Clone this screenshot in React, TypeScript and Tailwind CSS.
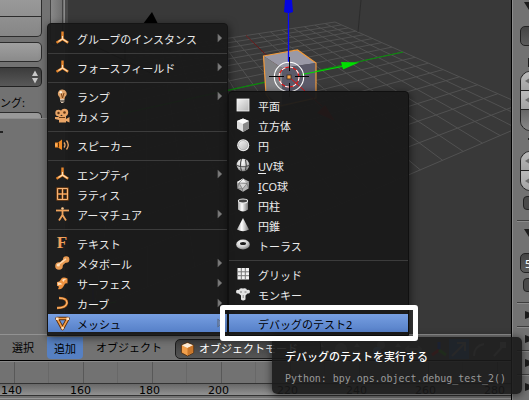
import React from "react";

type P = [number, number];

// Perspective projection of the viewport floor; both coordinates run from -1 to 1.
function floor(u: number, v: number): P {
  const w = 1 - 0.427 * u + 0.191 * v;
  return [(289 - 62 * u + 191 * v) / w, (77 + 26.3 * u - 15.1 * v) / w];
}

function seg(a: P, b: P) {
  return `M${a[0].toFixed(1)} ${a[1].toFixed(1)}L${b[0].toFixed(1)} ${b[1].toFixed(1)}`;
}

const steps = Array.from({ length: 17 }, (_, i) => (i - 8) / 8);
const gridPath = steps
  .map((t) => seg(floor(t, -1), floor(t, 1)) + seg(floor(-1, t), floor(1, t)))
  .join("");

function Scene() {
  return (
    <svg viewBox="68 0 443 334" width="443" height="334" className="block">
      <path d={gridPath} stroke="#515151" strokeWidth="1" fill="none" />
      <path d={seg(floor(0, -1), floor(0, 1))} stroke="#0a8c0a" strokeWidth="1.2" />
      <path d={seg(floor(-1, 0), [289, 77])} stroke="#6a1414" />
      <path d="M143 24L152 12L158 24Z" fill="#000" />
      <path d="M361 0L358 32" stroke="#2a2a2a" fill="none" strokeWidth="0.9" />
      <path d="M92 45L124 60L155 75M125 31V60" stroke="#000" fill="none" />
      <path d="M263.500 56L297.500 50L316 63L282 68Z" fill="#9a99a6" />
      <path d="M263.500 56L282 68V107L266 94Z" fill="#828285" />
      <path d="M282 68L316 63V98L282 107Z" fill="#5b5a69" />
      <path d="M263.500 56L297.500 50L316 63V98L275 107L266 94Z" fill="none" stroke="#f19a3c" strokeWidth="1.2" />
      <path d="M289 77L322 106" stroke="#e01010" />
      <path d="M317 113L325 105L335 121Z" fill="#b41212" />
      <path d="M302 74.500L345 66" stroke="#00dc00" strokeWidth="1.2" />
      <path d="M341 62L359 62.500L343 69.500Z" fill="#00e000" />
      <path d="M288.500 62V10" stroke="#0a0aff" strokeWidth="1.3" />
      <path d="M285 0H292L293 12Q288.500 14 284 12Z" fill="#0505e0" />
      <circle cx="289" cy="77" r="14.700" fill="none" stroke="#fff" strokeWidth="1.1" />
      <circle cx="289" cy="77" r="10" fill="none" stroke="#f01010" strokeWidth="1.1" />
      <circle cx="289" cy="77" r="10" fill="none" stroke="#fff" strokeWidth="1.1" strokeDasharray="3.900 3.950" />
      <path d="M269 76.500H284M295 76.500H309M289.500 57V71M289.500 83V97" stroke="#050505" />
      <rect x="287" y="75" width="4" height="4" fill="#f5a84c" stroke="#3a2a20" strokeWidth="0.8" />
      <path d="M93 306V283" stroke="#2020b0" />
      <path d="M93 306L116 302" stroke="#20a020" />
      <path d="M93 306L107 314" stroke="#a02020" />
    </svg>
  );
}

const O = "#e8872c";
const L = "#ffe0b8";

function Icon({ name }: { name: string }) {
  let body: React.ReactNode = null;
  switch (name) {
    case "empty":
      body = (
        <g fill="none">
          <path d="M8.500 1.500V9L2.500 12.700M8.500 9L14.200 12.700" stroke={O} strokeWidth="2.400" />
          <path d="M8.500 6V9L4.500 11.500M8.500 9L13.500 12.300" stroke={L} strokeWidth="1.100" />
        </g>
      );
      break;
    case "lamp":
      body = (
        <g>
          <path d="M8 1.500A4.200 4.200 0 0 0 5.500 9L6 11H10.500L11 9A4.200 4.200 0 0 0 8 1.500Z" fill="#dfa36a" />
          <path d="M7 4.500L8.500 10L10 5" stroke="#7a4214" fill="none" />
          <circle cx="6.800" cy="4.200" r="1.300" fill="#fff0dc" />
          <path d="M6 11.500H10.500M6 13H10.500M7 14.500H9.500" stroke="#d9c4ae" />
        </g>
      );
      break;
    case "camera":
      body = (
        <g fill="#e9a567">
          <circle cx="4.500" cy="5" r="3.200" />
          <circle cx="10.500" cy="4.500" r="3.700" />
          <path d="M1 9H4L5 8H12V14.500H5V12L1 11ZM12 11L15.500 9V14.500L12 13Z" />
          <circle cx="4.500" cy="5" r="1.200" fill="#5c3414" />
          <circle cx="10.500" cy="4.500" r="1.300" fill="#5c3414" />
          <path d="M5 9.500H11" stroke="#6b3c14" />
        </g>
      );
      break;
    case "speaker":
      body = (
        <g>
          <path d="M1 5.500H4L8 2.500V13L4 10.500H1Z" fill="#f08a24" />
          <path d="M4.500 5.500V10.500" stroke="#5c2c04" />
          <path d="M2 6.500V9.500" stroke="#ffd09a" />
          <path d="M10 5.500Q12 8 10 10.500M12.500 3.500Q16 8 12.500 12.500" fill="none" stroke="#e9a567" strokeWidth="1.300" />
        </g>
      );
      break;
    case "lattice":
      body = (
        <g fill="none">
          <path d="M3.500 2.500H13.500V13.500H3.500ZM8.500 2.500V13.500M3.500 8H13.500" stroke="#9c5214" strokeWidth="2.200" />
          <path d="M3.500 2.500H13.500V13.500H3.500ZM8.500 2.500V13.500M3.500 8H13.500" stroke="#f5b477" />
        </g>
      );
      break;
    case "armature":
      body = (
        <g fill="none" stroke="#eda25c">
          <path d="M2 4.500H15" strokeWidth="1.800" />
          <path d="M8.500 4V9L5 14.500M8.500 9L12 14.500" strokeWidth="1.800" />
          <circle cx="8.500" cy="2.500" r="1.300" fill="#ffc98e" stroke="none" />
        </g>
      );
      break;
    case "meta":
      body = (
        <g>
          <path d="M5 11L12 4.500" stroke="#e89a52" strokeWidth="4" />
          <circle cx="5" cy="11" r="3.800" fill="#e89a52" />
          <circle cx="12.200" cy="4.500" r="3.200" fill="#e89a52" />
          <path d="M4 10L12 3.800" stroke="#ffd9ae" strokeWidth="1.500" />
          <circle cx="4.300" cy="10" r="1.600" fill="#ffe2bf" />
        </g>
      );
      break;
    case "surface":
      body = (
        <g>
          <path d="M3 7Q6 7 7 4Q9 1.500 13.500 3.500V8.500Q11 7.500 10 10.500Q8 15 4 14Q6 10.500 3 11Z" fill="#ee9240" />
          <path d="M3.500 7.500Q7 7 8.500 9.500Q6 9 4 10.500ZM8 5Q10 3 12.500 4Q10 5 9.500 7Z" fill="#ffe0bc" />
        </g>
      );
      break;
    case "curve":
      body = (
        <g fill="none">
          <path d="M5 3Q13 3 13 8Q12 13 3 13" stroke="#d97822" strokeWidth="2.400" />
          <path d="M5 3Q13 3 13 8Q12 13 3 13" stroke="#ffc78c" strokeWidth="0.9" />
        </g>
      );
      break;
    case "mesh":
      body = (
        <g fill="none">
          <path d="M3 3.500H14L8.500 13.500Z" stroke="#5b2c08" strokeWidth="3.600" strokeLinejoin="round" />
          <path d="M3 3.500H14L8.500 13.500Z" stroke="#f3a04e" strokeWidth="1.700" />
          <path d="M2 2.500H4.500V5H2ZM12.500 2.500H15V5H12.500ZM7.500 12H9.700V14.300H7.500Z" fill="#ffe3c4" />
        </g>
      );
      break;
    case "plane":
      body = <rect x="2" y="2" width="12" height="12" fill="url(#gp)" stroke="#f5f5f5" strokeWidth="0.8" />;
      break;
    case "cube":
      body = (
        <g>
          <path d="M8 1.500L14 4V11.500L8 15L2 11.500V4Z" fill="#ddd" />
          <path d="M8 1.500L14 4L8 7L2 4Z" fill="#fbfbfb" />
          <path d="M8 7L14 4V11.500L8 15Z" fill="#888" />
        </g>
      );
      break;
    case "circle":
      body = (
        <g>
          <circle cx="8.200" cy="8.200" r="6" fill="#f4f4f4" />
          <circle cx="8.200" cy="8.200" r="4.700" fill="url(#gp)" stroke="#999" strokeWidth="0.6" />
        </g>
      );
      break;
    case "uv":
      body = (
        <g>
          <circle cx="8" cy="8" r="6.300" fill="url(#gs)" />
          <path d="M6.500 2Q4.500 8 6.500 14M10.500 2.500Q12 8 10.500 13.500M2 8.500Q8 11 14 8.500" stroke="#444" fill="none" strokeWidth="1.100" />
        </g>
      );
      break;
    case "ico":
      body = (
        <g>
          <path d="M8 1.500L14 4.500L13.500 11.500L8 14.800L2.500 11.500L2 5Z" fill="#b4b4b4" />
          <path d="M8 1.500L11 5.500L4 6L2 5Z" fill="#f2f2f2" />
          <path d="M4 6L12 6.500L7.500 12Z" fill="#d8d8d8" />
          <path d="M4 6L12 6.500L7.500 12ZM12 6.500L14 4.500M12 6.500L13.500 11.500M7.500 12V14.500M7.500 12L2.500 11.500L4 6L8 2" stroke="#666" strokeWidth="0.6" fill="none" />
        </g>
      );
      break;
    case "cylinder":
      body = (
        <g>
          <path d="M3 4V12.500Q8 16.500 13 12.500V4Z" fill="url(#gh)" />
          <ellipse cx="8" cy="4" rx="4.600" ry="2" fill="#444" stroke="#e8e8e8" strokeWidth="1.100" />
        </g>
      );
      break;
    case "cone":
      body = <path d="M8 1L14 12.500Q8 16 2 12.500Z" fill="url(#gh)" />;
      break;
    case "torus":
      body = (
        <g>
          <ellipse cx="8" cy="7.500" rx="6.800" ry="5" fill="url(#gs)" />
          <ellipse cx="8" cy="6.500" rx="3" ry="1.500" fill="#1c1c1c" />
        </g>
      );
      break;
    case "grid":
      body = (
        <g>
          <rect x="2.500" y="2" width="11.500" height="11.500" fill="#f2f2f2" />
          <path d="M6.300 2V13.500M10.300 2V13.500M2.500 5.800H14M2.500 9.700H14" stroke="#777" />
        </g>
      );
      break;
    case "monkey":
      body = (
        <g>
          <path d="M1 6Q1 3 4 4Q4.500 1.500 8 2.500Q11.500 1.500 12 4Q15 3 15 6Q14.500 8 12.500 7.500L10.500 9.500V13.500Q8 15.500 6 13.500V9.500L3.500 7.500Q1.500 8 1 6Z" fill="#e4e4e4" />
          <path d="M5 6H7M9.500 6H11.500" stroke="#777" strokeWidth="1.200" />
          <path d="M8.200 9V12" stroke="#888" />
        </g>
      );
      break;
  }
  if (name === "text")
    return <span className="w-4 shrink-0 text-center font-['Liberation_Serif',serif] text-[17px] leading-[16px] font-bold text-[#f0a05a]">F</span>;
  return (
    <svg viewBox="0 0 16 16" width="16" height="16" className="shrink-0">
      {body}
    </svg>
  );
}

function Gradients() {
  return (
    <svg width="0" height="0" className="absolute">
      <defs>
        <linearGradient id="gp" x1="0" y1="0" x2="1" y2="1">
          <stop offset="0" stopColor="#f4f4f4" />
          <stop offset="1" stopColor="#b4b4b4" />
        </linearGradient>
        <linearGradient id="gh">
          <stop offset="0" stopColor="#a8a8a8" />
          <stop offset="0.4" stopColor="#fff" />
          <stop offset="1" stopColor="#777" />
        </linearGradient>
        <radialGradient id="gs" cx="0.4" cy="0.3" r="0.75">
          <stop offset="0" stopColor="#fff" />
          <stop offset="0.6" stopColor="#ccc" />
          <stop offset="1" stopColor="#777" />
        </radialGradient>
      </defs>
    </svg>
  );
}

type Item = { icon: string; label: React.ReactNode; arrow?: boolean; active?: boolean } | null;

const addMenu: Item[] = [
  { icon: "empty", label: "グループのインスタンス", arrow: true },
  null,
  { icon: "empty", label: "フォースフィールド", arrow: true },
  null,
  { icon: "lamp", label: "ランプ", arrow: true },
  { icon: "camera", label: "カメラ" },
  null,
  { icon: "speaker", label: "スピーカー" },
  null,
  { icon: "empty", label: "エンプティ", arrow: true },
  { icon: "lattice", label: "ラティス" },
  { icon: "armature", label: "アーマチュア", arrow: true },
  null,
  { icon: "text", label: "テキスト" },
  { icon: "meta", label: "メタボール", arrow: true },
  { icon: "surface", label: "サーフェス", arrow: true },
  { icon: "curve", label: "カーブ", arrow: true },
  { icon: "mesh", label: "メッシュ", arrow: true, active: true },
];

const meshMenu: Item[] = [
  { icon: "plane", label: "平面" },
  { icon: "cube", label: "立方体" },
  { icon: "circle", label: "円" },
  { icon: "uv", label: <><u className="underline-offset-2">U</u>V球</> },
  { icon: "ico", label: <><u className="underline-offset-2">I</u>CO球</> },
  { icon: "cylinder", label: "円柱" },
  { icon: "cone", label: "円錐" },
  { icon: "torus", label: "トーラス" },
  null,
  { icon: "grid", label: "グリッド" },
  { icon: "monkey", label: "モンキー" },
  null,
  { icon: "", label: "デバッグのテスト2", active: true },
];

function MenuList({ items }: { items: Item[] }) {
  return (
    <>
      {items.map((it, i) =>
        it === null ? (
          <div key={i} className="h-[9px] pt-1">
            <div className="h-px bg-[#3c3c3c]" />
          </div>
        ) : (
          <div key={i} className="h-5">
            <div
              className={
                it.active
                  ? "flex h-[18px] items-center gap-[7px] bg-linear-to-b from-[#779fe2] to-[#5680c8] pr-[4px] pl-[6px] text-black"
                  : "flex h-[18px] items-center gap-[7px] pr-[4px] pl-[6px] text-[#ececec]"
              }
            >
              <Icon name={it.icon} />
              <span className="flex-1 pt-[3px] leading-[17px]">{it.label}</span>
              {it.arrow && (
                <svg width="6" height="10" viewBox="0 0 6 10">
                  <path d="M0.800 1L5 5L0.800 9Z" fill={it.active ? "#6c86b4" : "#7c7c7c"} stroke="#555" strokeWidth="0.5" />
                </svg>
              )}
            </div>
          </div>
        ),
      )}
    </>
  );
}

function LeftPanel() {
  return (
    <div className="flex h-[334px] w-[68px] shrink-0 bg-[#727272]">
      <div className="flex w-[50px] flex-col">
        <div className="h-[37px] w-[42px] rounded-br-[5px] border-r border-b border-[#2c2c2c] bg-linear-to-b from-[#999] to-[#868686]">
          <div className="h-[17px] border-b border-[#2c2c2c]" />
        </div>
        <div className="mt-[5px] h-5 w-[42px] rounded-r-[5px] border border-l-0 border-[#2c2c2c] bg-linear-to-b from-[#a0a0a0] to-[#8a8a8a]" />
        <div className="mt-[5px] flex h-5 w-[42px] items-center justify-end rounded-r-[5px] border border-l-0 border-[#222] bg-linear-to-b from-[#3c3c3c] to-[#585858] pr-[3px]">
          <svg width="6" height="14" viewBox="0 0 6 14">
            <path d="M0 6L3 0.500L6 6ZM0 8L3 13.500L6 8Z" fill="#c8c8c8" />
          </svg>
        </div>
        <div className="mt-[6px] h-[19px] pt-px leading-[18px] whitespace-nowrap text-black">ング:</div>
        <div className="h-[6px] w-[42px] rounded-tr-[5px] border-t border-r border-[#2c2c2c] bg-[#999]" />
        <div className="h-px w-[47px] bg-[#8c8c8c]" />
        <div className="flex-1 bg-[#727272] pt-[12px]">
          <div className="h-[2px] w-[3px] bg-[#222]" />
        </div>
      </div>
      <div className="h-[46px] w-[13px] rounded-b-[6px] border border-t-0 border-[#444] bg-linear-to-r from-[#888] to-[#707070]" />
      <div className="ml-auto w-1 border-l border-[#8a8a8a] bg-[#4a4a4a]" />
    </div>
  );
}

function Fold({ open }: { open?: boolean }) {
  return (
    <svg width="12" height="8" viewBox="0 0 12 8" className="block shrink-0">
      <path d={open ? "M0 0H12L5 8Z" : "M1 0L11 4L1 8Z"} fill="#1c1c1c" />
    </svg>
  );
}

function Section() {
  return (
    <div className="flex h-6 items-center border-t border-[#3e3e3e] pl-[7px] shadow-[inset_0_1px_0_#8a8a8a]">
      <Fold />
    </div>
  );
}

function Step() {
  return (
    <div className="flex h-full items-center bg-linear-to-b from-[#bbb] to-[#a2a2a2] pl-1">
      <svg width="5" height="6" viewBox="0 0 5 6">
        <path d="M5 0V6L0 3Z" fill="#6a6a6a" />
      </svg>
    </div>
  );
}

function RightPanel() {
  return (
    <div className="h-[400px] w-[18px] shrink-0 overflow-hidden border-l border-black bg-[#727272] pl-[5px] shadow-[inset_1px_0_0_#8c8c8c]">
      <div className="h-[26px] pt-[2px] pl-[7px]"><Fold open /></div>
      <div className="ml-[3px] h-5 w-5 rounded-l-[5px] border border-[#222] bg-linear-to-b from-[#444] to-[#5c5c5c]" />
      <div className="h-[25px] pt-[12px] pl-[11px]">
        <div className="h-[9px] w-px bg-[#1c1c1c]" />
      </div>
      <div className="ml-[3px] grid h-[60px] w-5 grid-rows-[19px_19px_20px] divide-y divide-[#222] overflow-hidden rounded-l-[10px] border border-[#222]">
        <div><Step /></div>
        <div><Step /></div>
        <div className="bg-linear-to-b from-[#666] to-[#888]" />
      </div>
      <div className="h-5 pt-[7px] pl-[11px]">
        <div className="h-[2px] w-px bg-[#1c1c1c]" />
      </div>
      <div className="ml-[3px] grid h-[40px] w-5 grid-rows-[19px_19px] divide-y divide-[#222] overflow-hidden rounded-l-[10px] border border-[#222]">
        <div><Step /></div>
        <div><Step /></div>
      </div>
      <div className="mt-[5px] ml-[6px] h-[14px] w-5 rounded-l-[4px] border border-[#222] bg-[#4a4a4a]" />
      <div className="mt-[10px] h-[33px] border-t border-[#3e3e3e] pt-[8px] pl-[7px] shadow-[inset_0_1px_0_#8a8a8a]"><Fold open /></div>
      <div className="ml-[3px] h-5 w-5 rounded-l-[5px] border border-[#222] bg-linear-to-b from-[#444] to-[#5c5c5c] pl-1 leading-[20px] text-white">5</div>
      <div className="mt-[5px] ml-[6px] h-[14px] w-5 rounded-l-[4px] border border-[#222] bg-[#4a4a4a]" />
      <div className="mt-[10px]">
        <Section />
        <Section />
        <Section />
        <Section />
      </div>
    </div>
  );
}

function Header() {
  return (
    <div className="flex h-[27px] items-center overflow-hidden border-t border-b border-t-[#929292] border-b-black bg-[#727272] pl-[12px] whitespace-nowrap text-black">
      <span className="w-[35px] pt-[2px]">選択</span>
      <span className="h-[22px] w-9 rounded-b-[4px] bg-[#5680c2] text-center leading-[24px]">追加</span>
      <span className="ml-[13px] w-[79px] pt-[2px]">オブジェクト</span>
      <div className="mt-[2px] flex h-[20px] w-[146px] shrink-0 items-center gap-[4px] rounded-[5px] border border-[#1c1c1c] bg-linear-to-b from-[#3e3e3e] to-[#555] pl-1 text-white">
        <svg width="15" height="16" viewBox="0 0 16 16">
          <path d="M8 1L14.500 4V12L8 15.500L1.500 12V4Z" fill="#f2a04c" stroke="#4a2608" strokeWidth="0.8" />
          <path d="M8 1.500L14 4L8 7L2 4Z" fill="#fff0dc" />
          <path d="M8 7L14 4V11.500L8 15Z" fill="#c9762a" />
        </svg>
        <span className="pt-px">オブジェクトモード</span>
      </div>
      <svg width="190" height="20" viewBox="321 0 190 20" className="mt-[2px] shrink-0">
        <circle cx="341" cy="10" r="6" fill="#999" />
        <circle cx="381" cy="6" r="4" fill="#999" />
        <circle cx="377" cy="12" r="4" fill="#7aa7d8" />
        <path d="M318 8L321 4L324 8ZM318 12L321 16L324 12ZM354 8L357 4L360 8ZM354 12L357 16L360 12ZM395 8L398 4L401 8ZM395 12L398 16L401 12Z" fill="#aaa" />
        <path d="M406 10H421M409 7L406 10L409 13M418 7L421 10L418 13" stroke="#999" fill="none" strokeWidth="2" />
        <rect x="449" y="0" width="20" height="20" fill="#5680c2" />
        <path d="M439 3V11" stroke="#2d64ff" strokeWidth="3" />
        <path d="M439 11L432 16" stroke="#e33" strokeWidth="3" />
        <path d="M439 11L446 16" stroke="#5c3" strokeWidth="3" />
        <path d="M452 17L464 5M457 4H465V12M474 17Q474 7 484 5M494 17L503 7" stroke="#aaa" strokeWidth="2" fill="none" />
        <rect x="500" y="3" width="6" height="6" fill="#aaa" />
      </svg>
    </div>
  );
}

const ticks = [140, 160, 180, 200, 220, 240, 260, 280];

function Timeline() {
  return (
    <div className="flex h-[39px] flex-col overflow-hidden bg-[#727272]">
      <div className="flex h-[22px] border-t border-[#8a8a8a] pl-[14px]">
        {ticks.map((t) => (
          <div key={t} className="flex w-[69px] shrink-0 border-l border-[#585858]">
            <div className="ml-[33px] w-px bg-[#686868]" />
          </div>
        ))}
      </div>
      <div className="flex h-[13px] border-t border-b border-[#333] bg-linear-to-b from-[#686868] to-[#929292] font-['DejaVu_Sans',sans-serif] leading-[14px] text-black">
        <div className="-ml-[23px] flex">
          {ticks.map((t) => (
            <span key={t} className="w-[69px] shrink-0 text-center">{t}</span>
          ))}
        </div>
      </div>
      <div className="mt-[2px] h-px bg-[#999]" />
    </div>
  );
}

export default function App() {
  return (
    <div className="relative flex h-[400px] w-[529px] overflow-hidden bg-[#727272] font-['Noto_Sans','Noto_Sans_CJK_JP',sans-serif] text-[11px]">
      <Gradients />
      <div className="flex w-[511px] shrink-0 flex-col">
        <div className="flex h-[334px]">
          <LeftPanel />
          <div className="h-[334px] w-[443px] bg-[#393939]">
            <Scene />
          </div>
        </div>
        <Header />
        <Timeline />
      </div>
      <RightPanel />

      <div className="absolute top-[23px] left-[47px] h-[313px] w-[181px] rounded-[4px] rounded-b-none border border-[#151515] bg-[#191919]/95 pt-[5px] shadow-[1px_2px_8px_rgba(0,0,0,0.55)]">
        <MenuList items={addMenu} />
      </div>
      <div className="absolute top-[91px] left-[228px] h-[245px] w-[181px] rounded-[4px] rounded-b-none border border-[#101010] bg-[#191919]/95 pt-[4px] shadow-[1px_2px_8px_rgba(0,0,0,0.55)]">
        <MenuList items={meshMenu} />
      </div>
      <div className="absolute top-[337px] left-[272px] h-[57px] w-[250px] rounded-[5px] bg-[#191919]/90 pl-[13px] whitespace-nowrap shadow-[0_1px_8px_rgba(0,0,0,0.6)]">
        <div className="mt-[10px] leading-[20px] font-medium text-white">デバッグのテストを実行する</div>
        <div className="mt-[2px] font-['DejaVu_Sans_Mono',monospace] text-[9.930px] leading-[19px] text-[#999]">
          Python: bpy.ops.object.debug_test_2()
        </div>
      </div>
      <div className="absolute top-[305px] left-[220px] h-[36px] w-[198px] rounded-[3px] border-[5px] border-white" />
    </div>
  );
}
